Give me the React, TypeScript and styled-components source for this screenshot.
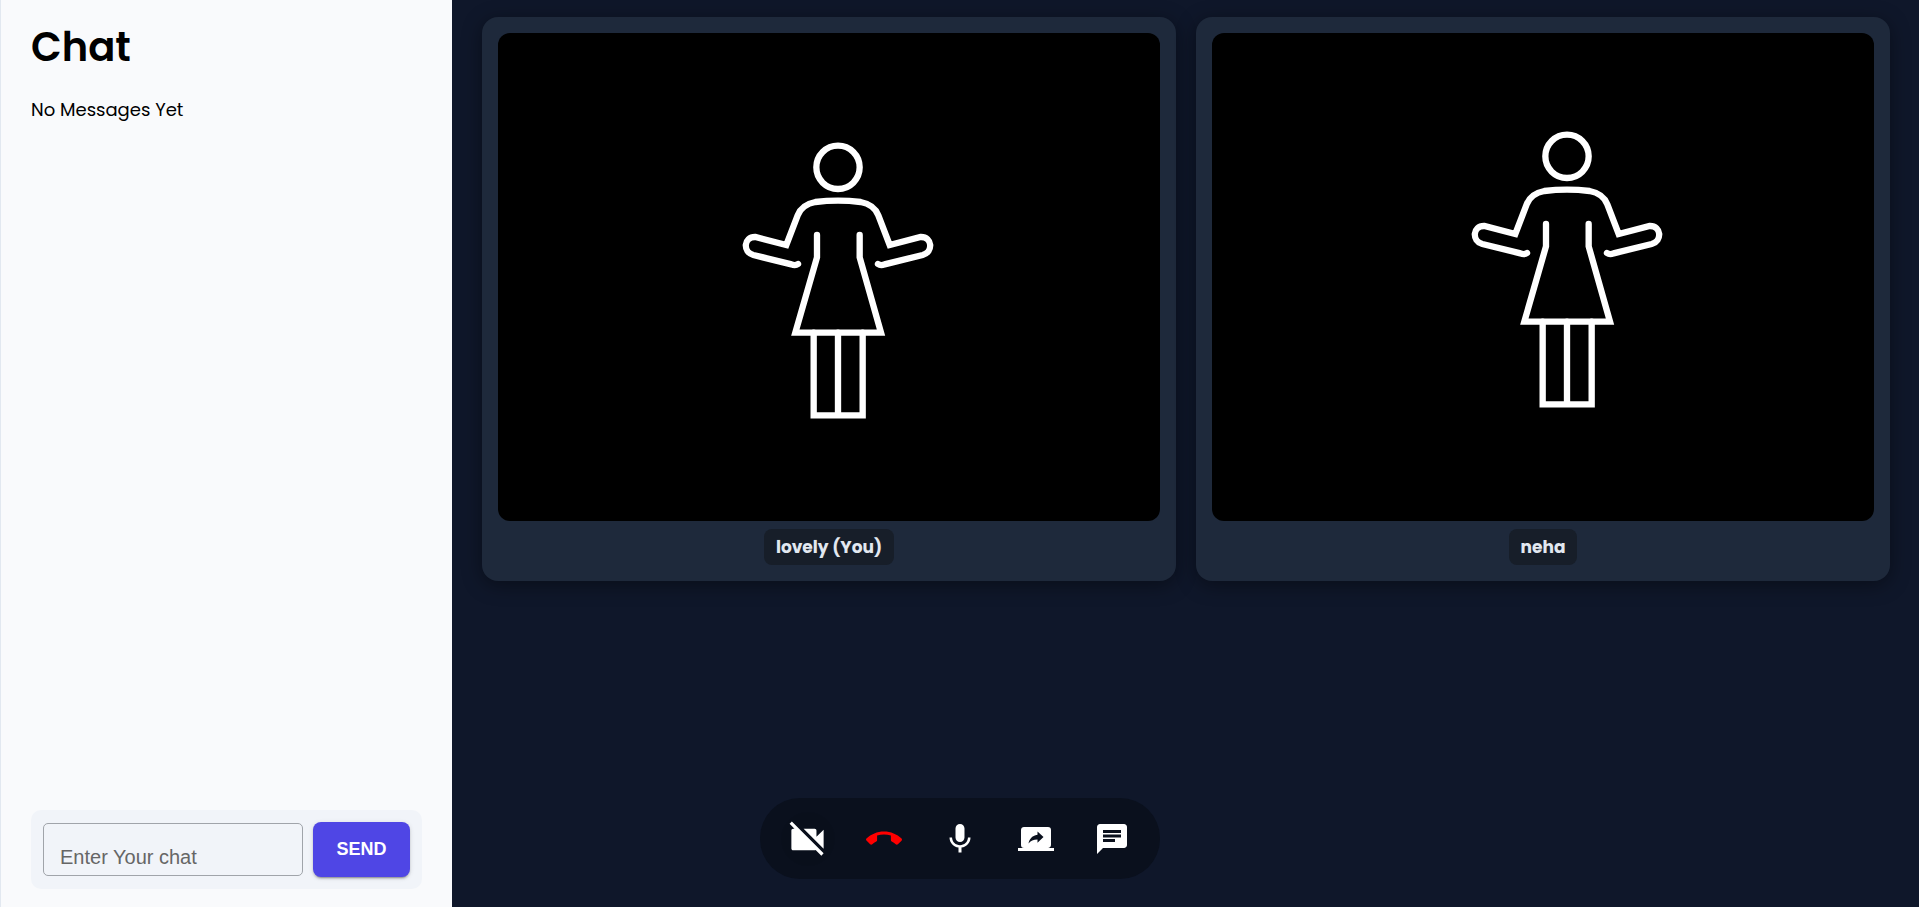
import React from "react";
import styled, { createGlobalStyle } from "styled-components";
import { MdVideocamOff, MdCallEnd, MdMic, MdScreenShare, MdChat } from "react-icons/md";

const GlobalStyle = createGlobalStyle`
  * { box-sizing: border-box; }
  body {
    margin: 0;
    background: #0f172a;
    color: #000;
    font-family: Poppins, Inter, "Liberation Sans", sans-serif;
  }
`;

const Page = styled.div`
  display: flex;
  min-height: 100vh;
`;

const ChatPanel = styled.aside`
  display: flex;
  flex-direction: column;
  flex: 0 0 452px;
  min-width: 0;
  padding: 18px 30px;
  border-left: 1px solid #e2e8f0;
  background: #f9fafc;
`;

const ChatTitle = styled.h1`
  margin: 0;
  font-size: 40px;
  font-weight: 600;
  line-height: 58px;
`;

const Messages = styled.div`
  flex: 1;
  padding-top: 20px;
`;

const EmptyNote = styled.p`
  margin: 0;
  font-size: 18px;
  line-height: 28px;
`;

const ChatForm = styled.form`
  display: flex;
  align-items: center;
  gap: 10px;
  padding: 12px;
  border-radius: 10px;
  background: #f1f4f9;
`;

const ChatInput = styled.input`
  flex: 1;
  min-width: 0;
  height: 53px;
  padding: 16px 16px 0;
  border: 1px solid #a0a4aa;
  border-radius: 5px;
  background: transparent;
  font: 20px "Liberation Sans", Arial, sans-serif;
  &::placeholder { color: #666; opacity: 1; }
`;

const SendButton = styled.button`
  width: 97px;
  height: 55px;
  padding: 0 0 2px;
  border: 0;
  border-radius: 8px;
  background: #4f46e5;
  color: #fff;
  font: 700 18px/24px "Liberation Sans", Arial, sans-serif;
  box-shadow: 0 3px 1px -2px rgba(0, 0, 0, 0.2), 0 2px 2px rgba(0, 0, 0, 0.14), 0 1px 5px rgba(0, 0, 0, 0.12);
`;

const Stage = styled.main`
  flex: 1;
  min-width: 0;
  padding: 17px 29px 17px 30px;
`;

const VideoGrid = styled.div`
  display: grid;
  grid-template-columns: 1fr 1fr;
  gap: 20px;
`;

const VideoCard = styled.section`
  display: flex;
  flex-direction: column;
  align-items: center;
  gap: 8px;
  padding: 16px;
  border-radius: 16px;
  background: #1e293b;
  box-shadow: 0 4px 20px rgba(0, 0, 0, 0.4);
`;

const Video = styled.svg`
  display: block;
  width: 100%;
  aspect-ratio: 662 / 488;
  border-radius: 12px;
  background: #000;
`;

const NameTag = styled.span`
  padding: 4px 12px;
  border-radius: 8px;
  background: #171e29;
  color: #e2e8f0;
  font-size: 17px;
  font-weight: 700;
  line-height: 28px;
`;

const Controls = styled.nav`
  position: fixed;
  bottom: 28px;
  left: 50%;
  transform: translateX(-50%);
  display: flex;
  gap: 22px;
  padding: 14px 21px 13px;
  border-radius: 40px;
  background: #0a101d;
`;

const ControlButton = styled.button<{ $color?: string; $active?: boolean }>`
  display: flex;
  align-items: center;
  justify-content: center;
  width: 54px;
  height: 54px;
  padding: 0;
  border: 0;
  border-radius: 50%;
  background: ${(p) => (p.$active ? "rgba(0, 0, 0, 0.04)" : "transparent")};
  color: ${(p) => p.$color ?? "#fff"};
  font-size: ${(p) => (p.$active ? 43 : 36)}px;
`;

function ShruggingFigure({ x, y }: { x: number; y: number }) {
  return (
    <g transform={`translate(${x} ${y})`} fill="none" stroke="#fff" strokeWidth="19" strokeLinecap="round">
      <circle cx="324" cy="112" r="65" />
      <path d="M204 402 Q196 408 184 403 L70 375 C38 366 40 320 76 321 L169 345 L203 256 Q215 224 256 216 Q324 208 392 216 Q433 224 445 256 L479 345 L572 321 C608 320 610 366 578 375 L464 403 Q452 408 444 402" />
      <path d="M261 315 V382 L196 608 H453 L389 382 V315" />
      <path d="M251 608 V856 H398 V608 M324 608 V856" />
    </g>
  );
}

const participants = [
  { name: "lovely (You)", x: 696, y: 291 },
  { name: "neha", x: 741, y: 258 },
];

const controls = [
  { label: "Turn camera on", Icon: MdVideocamOff, active: true },
  { label: "End call", Icon: MdCallEnd, color: "#f00" },
  { label: "Mute microphone", Icon: MdMic },
  { label: "Share screen", Icon: MdScreenShare },
  { label: "Toggle chat", Icon: MdChat },
];

export default function App() {
  return (
    <>
      <GlobalStyle />
      <Page>
        <ChatPanel>
          <ChatTitle>Chat</ChatTitle>
          <Messages>
            <EmptyNote>No Messages Yet</EmptyNote>
          </Messages>
          <ChatForm onSubmit={(e) => e.preventDefault()}>
            <ChatInput type="text" aria-label="Enter Your chat" placeholder="Enter Your chat" />
            <SendButton type="submit">SEND</SendButton>
          </ChatForm>
        </ChatPanel>
        <Stage>
          <VideoGrid>
            {participants.map(({ name, x, y }) => (
              <VideoCard key={name}>
                <Video viewBox="0 0 1986 1464" role="img" aria-label={`Video of ${name}`}>
                  <ShruggingFigure x={x} y={y} />
                </Video>
                <NameTag>{name}</NameTag>
              </VideoCard>
            ))}
          </VideoGrid>
        </Stage>
        <Controls aria-label="Call controls">
          {controls.map(({ label, Icon, color, active }) => (
            <ControlButton key={label} type="button" aria-label={label} $color={color} $active={active}>
              <Icon />
            </ControlButton>
          ))}
        </Controls>
      </Page>
    </>
  );
}
